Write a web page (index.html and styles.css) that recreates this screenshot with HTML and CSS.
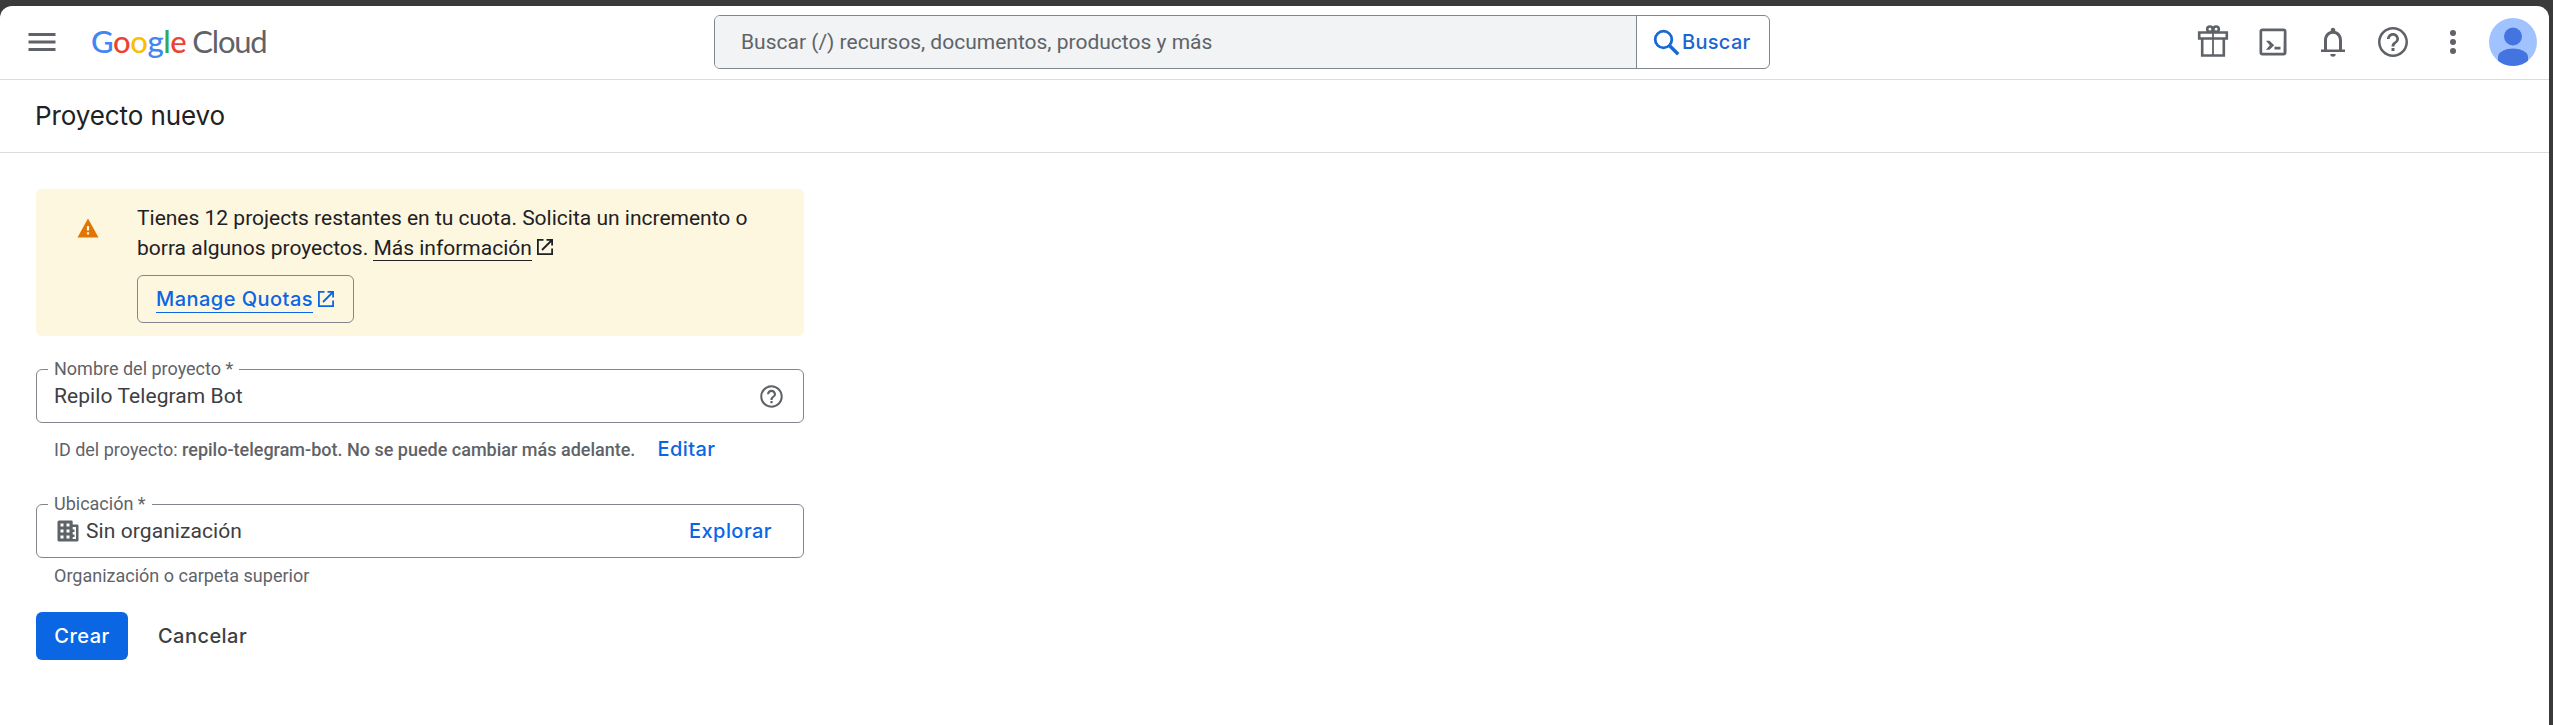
FILE: index.html
```
<!DOCTYPE html>
<html lang="es">
<head>
<meta charset="utf-8">
<title>Proyecto nuevo – Google Cloud</title>
<link rel="stylesheet" href="styles.css">
</head>
<body>
<div class="window">
  <header class="topbar">
    <div class="brand">
      <svg class="menu" width="36" height="36" viewBox="0 0 24 24"><path d="M3 18h18v-2H3v2zm0-5h18v-2H3v2zm0-7v2h18V6H3z"/></svg>
      <div class="logo"><span class="logo-google"><span class="b">G</span><span class="r">o</span><span class="y">o</span><span class="b">g</span><span class="g">l</span><span class="r">e</span></span><span class="logo-cloud">Cloud</span></div>
    </div>
    <div class="search">
      <div class="search-input">Buscar (/) recursos, documentos, productos y más</div>
      <div class="search-button">
        <svg width="27" height="27" viewBox="0 0 27 27"><circle class="lens" cx="10.500" cy="10.500" r="8.300"/><path class="handle" d="M16.200 16.200L25.200 25.200"/></svg>
        <span>Buscar</span>
      </div>
    </div>
    <div class="tools">
      <svg class="gift" width="36" height="36" viewBox="0 0 36 36"><path d="M4.200 8.500h27.600v6H4.200zM7.200 14.500h21.600v17H7.200z"/><path class="ribbon" d="M18 8v23"/><circle cx="14.900" cy="5.200" r="2.700"/><circle cx="21.100" cy="5.200" r="2.700"/></svg>
      <svg width="36" height="36" viewBox="0 0 24 24"><path d="M19 3H5a2 2 0 0 0-2 2v14a2 2 0 0 0 2 2h14a2 2 0 0 0 2-2V5a2 2 0 0 0-2-2zm0 16.200H4.800V4.800h14.400zM7.300 11.200h2.400l3.100 3-3.100 3H7.300l2.600-3zM13 15.200h4v1.800h-4z"/></svg>
      <svg width="36" height="36" viewBox="0 0 24 24"><path d="M18 17v-6c0-3.070-1.630-5.640-4.500-6.320V4c0-.83-.67-1.500-1.500-1.500s-1.500.67-1.500 1.500v.68C7.640 5.360 6 7.920 6 11v6H4v1.700h16V17zm-2 0H8v-6c0-2.480 1.510-4.500 4-4.500s4 2.020 4 4.500zM10.200 20a1.800 1.800 0 0 0 3.600 0z"/></svg>
      <svg width="36" height="36" viewBox="0 0 24 24"><path d="M11 18h2v-2h-2v2zm1-16C6.480 2 2 6.480 2 12s4.480 10 10 10 10-4.480 10-10S17.520 2 12 2zm0 18.300a8.300 8.300 0 1 1 0-16.600 8.300 8.300 0 0 1 0 16.600zM12 6c-2.210 0-4 1.790-4 4h1.800c0-1.210.99-2.200 2.200-2.200s2.200.99 2.200 2.200c0 2-3.200 1.750-3.200 5h2c0-2.250 3-2.500 3-5 0-2.210-1.790-4-4-4z"/></svg>
      <svg width="36" height="36" viewBox="0 0 24 24"><circle cx="12" cy="6" r="2"/><circle cx="12" cy="12" r="2"/><circle cx="12" cy="18" r="2"/></svg>
      <svg class="avatar" width="48" height="48" viewBox="0 0 48 48"><clipPath id="round"><circle cx="24" cy="24" r="24"/></clipPath><g clip-path="url(#round)"><path class="avatar-bg" d="M0 0h48v48H0z"/><circle cx="24" cy="18.500" r="9"/><path d="M9 48V39c0-5.500 8-8.500 15-8.500s15 3 15 8.500v9z"/></g></svg>
    </div>
  </header>
  <div class="titlebar"><h1>Proyecto nuevo</h1></div>
  <main class="form">
    <section class="alert">
      <svg class="warn" width="24" height="24" viewBox="0 0 24 24"><path d="M1.500 21.500h21L12 2.500z"/><path class="warn-mark" d="M10.900 10h2.200v4.500h-2.200zM10.900 16.200h2.200v2.200h-2.200z"/></svg>
      <div class="alert-body">
        <p>Tienes 12 projects restantes en tu cuota. Solicita un incremento o<br>borra algunos proyectos. <a class="more">Más información</a><svg class="ext" width="16" height="16" viewBox="0 0 16 16"><path d="M6.500 .9H.9v14.200h14.200V9.500M9.500 .9h5.600v5.600M15 1L5 11"/></svg></p>
        <div class="quota"><a>Manage Quotas</a><svg class="ext" width="16" height="16" viewBox="0 0 16 16"><path d="M6.500 .9H.9v14.200h14.200V9.500M9.500 .9h5.600v5.600M15 1L5 11"/></svg></div>
      </div>
    </section>
    <fieldset class="field name">
      <legend>Nombre del proyecto *</legend>
      <div class="value"><span>Repilo Telegram Bot</span>
        <svg class="help" width="27" height="27" viewBox="0 0 24 24"><path d="M11 18h2v-2h-2v2zm1-16C6.480 2 2 6.480 2 12s4.480 10 10 10 10-4.480 10-10S17.520 2 12 2zm0 18.200a8.200 8.200 0 1 1 0-16.400 8.200 8.200 0 0 1 0 16.400zM12 6c-2.210 0-4 1.790-4 4h1.900c0-1.100.99-2.100 2.100-2.100s2.100.99 2.100 2.100c0 2-3.100 1.750-3.100 5h2c0-2.250 3-2.500 3-5 0-2.210-1.790-4-4-4z"/></svg>
      </div>
    </fieldset>
    <div class="id-row"><span class="hint">ID del proyecto: <b>repilo-telegram-bot. No se puede cambiar más adelante.</b></span><a class="link">Editar</a></div>
    <fieldset class="field place">
      <legend>Ubicación *</legend>
      <div class="value">
        <svg class="org" width="22" height="22" viewBox="0 0 22 22"><path fill-rule="evenodd" d="M2 .5h12.500a1.200 1.200 0 0 1 1.200 1.200V4.500h4.600a1.200 1.200 0 0 1 1.200 1.200v14.600a1.200 1.200 0 0 1-1.200 1.200H2a1.500 1.500 0 0 1-1.500-1.500V2A1.500 1.500 0 0 1 2 .5zM3.500 3.500v3h3v-3zm6 0v3h3v-3zm-6 6v3h3v-3zm6 0v3h3v-3zm-6 6v3h3v-3zm6 0v3h3v-3zM15.700 7v2.500h1.800V12h-1.800v2.500h1.800V17h-1.800v2h3.300V7z"/></svg>
        <span class="org-name">Sin organización</span><a class="link explore">Explorar</a>
      </div>
    </fieldset>
    <p class="hint sub">Organización o carpeta superior</p>
    <div class="actions"><button class="create">Crear</button><button class="cancel">Cancelar</button></div>
  </main>
</div>
</body>
</html>
```

FILE: styles.css
```
* { box-sizing: border-box; }
body { margin: 0; height: 725px; padding: 6px 4px 0 0; overflow: hidden; background: #3b3a3b; font-family: Roboto, "Liberation Sans", sans-serif; font-size: 21px; color: #202124; }
h1, p { margin: 0; font-weight: 400; }
svg { display: block; flex: none; fill: currentColor; }

.window { height: 719px; background: #fff; border-radius: 12px 12px 0 0; }

/* Top bar */
.topbar { height: 74px; border-bottom: 1px solid #dadce0; display: flex; align-items: center; padding: 0 12px 1px 24px; color: #5f6368; }
.brand { width: 690px; display: flex; align-items: center; gap: 31px; }
.logo { display: flex; gap: 6px; padding-bottom: 3px; font-family: Lato, sans-serif; font-size: 31px; line-height: 40px; letter-spacing: -0.4px; }
.logo-google { font-weight: 500; }
.logo-cloud { letter-spacing: -1.200px; }
.b { color: #4285f4; }
.r { color: #ea4335; }
.y { color: #fbbc04; }
.g { color: #34a853; }
.search { width: 1056px; height: 54px; display: flex; border: 1px solid #80868b; border-radius: 6px; overflow: hidden; }
.search-input { width: 922px; border-right: 1px solid #80868b; background: #f1f3f4; padding-left: 26px; line-height: 52px; }
.search-button { flex: 1; display: flex; align-items: center; gap: 2px; padding-left: 16px; color: #1967d2; font: 500 20px Inter, sans-serif; letter-spacing: .3px; }
.lens, .handle { fill: none; stroke: currentColor; stroke-width: 2.800; }
.handle { stroke-width: 3.400; }
.tools { margin-left: auto; display: flex; align-items: center; gap: 24px; }
.gift { fill: none; stroke: currentColor; stroke-width: 2.600; }
.ribbon { stroke-width: 1.800; }
.avatar { margin-left: -6px; fill: #4374e0; }
.avatar-bg { fill: #a0c3ff; }

.titlebar { height: 73px; border-bottom: 1px solid #dadce0; padding-left: 35px; display: flex; align-items: center; }
h1 { font: 400 26px/36px Inter, sans-serif; letter-spacing: -.1px; }

/* Form */
.form { width: 804px; padding: 36px 0 0 36px; }
.alert { height: 147px; border-radius: 6px; background: #fef7e0; display: flex; padding: 14px 0 0 40px; }
.warn { margin-top: 13px; color: #e37400; }
.warn-mark { fill: #fef7e0; }
.alert-body { margin-left: 37px; line-height: 30px; }
.more { border-bottom: 1px solid #202124; }
.ext { display: inline-block; fill: none; stroke: currentColor; stroke-width: 1.800; margin-left: 5px; }
.quota { width: 217px; height: 48px; margin-top: 12px; border: 1px solid #80868b; border-radius: 6px; display: flex; align-items: center; padding-left: 18px; color: #0b66e4; font: 500 20px/26px Inter, sans-serif; letter-spacing: .46px; }
.quota a { border-bottom: 1px solid; }
.field { margin: 0; padding: 0 18px 0 17px; border: 1px solid #80868b; border-radius: 6px; min-width: 0; color: #3c4043; }
.name { margin-top: 22px; height: 65px; }
.field legend { margin-left: -6px; padding: 0 6px; height: 22px; line-height: 22px; font-size: 18px; color: #5f6368; }
.value { display: flex; align-items: center; height: 32px; letter-spacing: .08px; }
.help { margin-left: auto; color: #5f6368; }
.id-row { display: flex; align-items: center; height: 30px; margin-top: 11px; padding-left: 18px; gap: 22px; }
.hint { font-size: 18px; color: #5f6368; }
.hint b { font-weight: 500; }
.link { color: #0b66e4; font: 500 20px Inter, sans-serif; letter-spacing: .45px; }
.place { margin-top: 29px; height: 65px; }
.org { margin-left: 3px; color: #5f6368; }
.org-name { margin-left: 7px; }
.explore { margin-left: auto; margin-right: 13px; }
.sub { padding-left: 18px; line-height: 24px; margin-top: 6px; }
.actions { display: flex; margin-top: 24px; }
button { border: 0; padding: 0; background: none; height: 48px; font: 500 20px Inter, sans-serif; letter-spacing: .45px; color: #3c4043; }
.create { width: 92px; border-radius: 6px; background: #0b66e4; color: #fff; }
.cancel { margin-left: 30px; }
```
